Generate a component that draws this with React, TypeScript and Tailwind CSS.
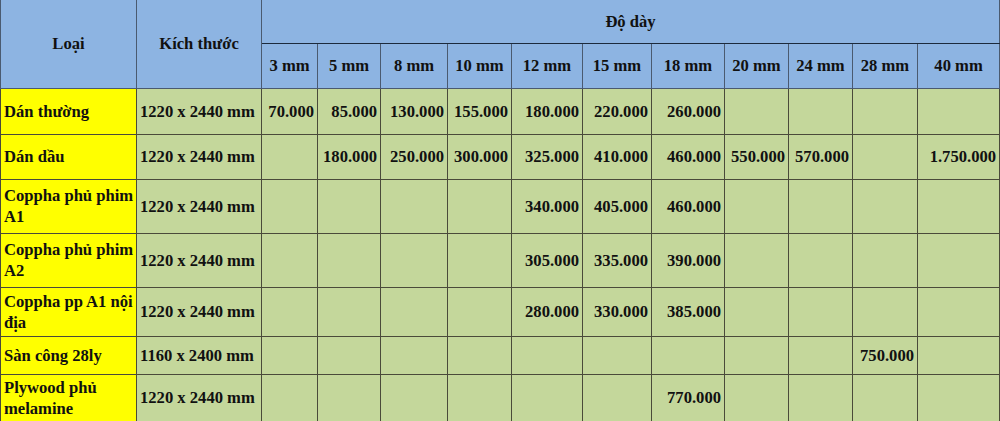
import React from 'react';

const sizes = ['3 mm', '5 mm', '8 mm', '10 mm', '12 mm', '15 mm', '18 mm', '20 mm', '24 mm', '28 mm', '40 mm'];
const colWidths = [136, 125, 56, 63, 67, 64, 71, 69, 73, 64, 64, 65, 82];

const rows: { name: string; size: string; prices: string[]; h: string }[] = [
  {
    name: 'Dán thường',
    size: '1220 x 2440 mm',
    prices: ['70.000', '85.000', '130.000', '155.000', '180.000', '220.000', '260.000', '', '', '', ''],
    h: 'h-[46px]',
  },
  {
    name: 'Dán dầu',
    size: '1220 x 2440 mm',
    prices: ['', '180.000', '250.000', '300.000', '325.000', '410.000', '460.000', '550.000', '570.000', '', '1.750.000'],
    h: 'h-[45px]',
  },
  {
    name: 'Coppha phủ phim A1',
    size: '1220 x 2440 mm',
    prices: ['', '', '', '', '340.000', '405.000', '460.000', '', '', '', ''],
    h: 'h-[54px]',
  },
  {
    name: 'Coppha phủ phim A2',
    size: '1220 x 2440 mm',
    prices: ['', '', '', '', '305.000', '335.000', '390.000', '', '', '', ''],
    h: 'h-[54px]',
  },
  {
    name: 'Coppha pp A1 nội địa',
    size: '1220 x 2440 mm',
    prices: ['', '', '', '', '280.000', '330.000', '385.000', '', '', '', ''],
    h: 'h-[49px]',
  },
  {
    name: 'Sàn công 28ly',
    size: '1160 x 2400 mm',
    prices: ['', '', '', '', '', '', '', '', '', '750.000', ''],
    h: 'h-[38px]',
  },
  {
    name: 'Plywood phủ melamine',
    size: '1220 x 2440 mm',
    prices: ['', '', '', '', '', '', '770.000', '', '', '', ''],
    h: 'h-[47px]',
  },
];

const App = () => {
  return (
    <div className="w-[1000px] h-[421px] overflow-hidden bg-white">
      <table
        className="table-fixed border-collapse w-[999px] text-[16.6px] font-bold leading-[21px] text-[#111]"
        style={{ fontFamily: '"Liberation Serif", "Times New Roman", serif' }}
      >
        <colgroup>
          {colWidths.map((w, i) => (
            <col key={i} style={{ width: w }} />
          ))}
        </colgroup>
        <thead className="bg-[#8db4e2]">
          <tr className="h-[43px]">
            <th rowSpan={2} className="border border-[#4a5a70] border-t-0 text-center align-middle font-bold">
              Loại
            </th>
            <th rowSpan={2} className="border border-[#4a5a70] border-t-0 text-center align-middle font-bold">
              Kích thước
            </th>
            <th colSpan={11} className="border border-[#4a5a70] border-t-0 border-b-[#1c2a3c] text-center align-middle font-bold">
              Độ dày
            </th>
          </tr>
          <tr className="h-[45px]">
            {sizes.map((s) => (
              <th key={s} className="border border-[#4a5a70] border-t-[#1c2a3c] text-center align-middle font-bold px-0">
                {s}
              </th>
            ))}
          </tr>
        </thead>
        <tbody>
          {rows.map((r) => (
            <tr key={r.name} className={r.h}>
              <td className="border border-[#4a4a3a] bg-[#ffff00] pl-[3px] pr-0 text-left align-middle">{r.name}</td>
              <td className="border border-[#4a4a3a] bg-[#c4d79b] pl-[3px] pr-0 text-left align-middle whitespace-nowrap">
                {r.size}
              </td>
              {r.prices.map((p, i) => (
                <td
                  key={i}
                  className="border border-[#4a4a3a] bg-[#c4d79b] pl-0 pr-[3px] text-right align-middle whitespace-nowrap"
                >
                  {p}
                </td>
              ))}
            </tr>
          ))}
        </tbody>
      </table>
    </div>
  );
};

export default App;
